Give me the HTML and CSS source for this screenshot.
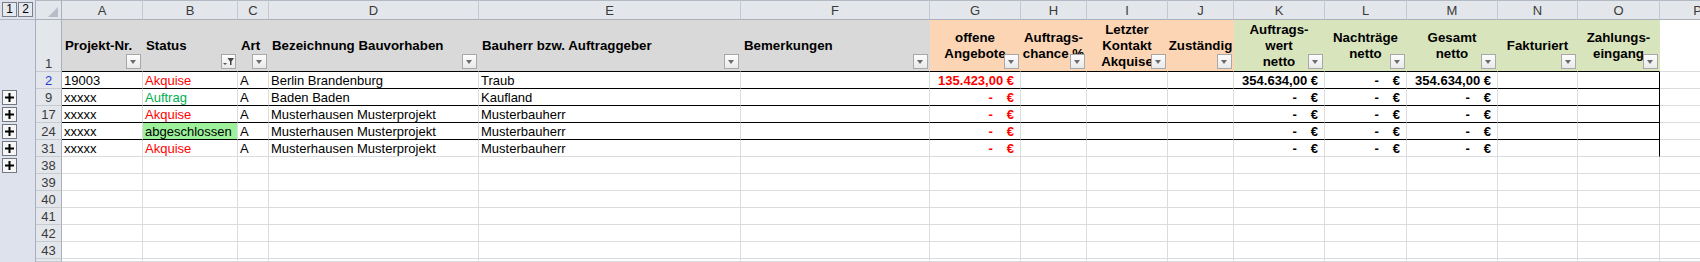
FILE: index.html
```html
<!DOCTYPE html>
<html lang="de">
<head>
<meta charset="UTF-8">
<title>Projektliste</title>
<link rel="stylesheet" href="styles.css">
</head>
<body>
<div class="sheet">
  <!-- column letters -->
  <div class="ol top"><span class="lvl">1</span><span class="lvl">2</span></div>
  <div class="corner"><svg width="10" height="10" viewBox="0 0 10 10"><polygon points="10,0 10,10 0,10" fill="#b7bcc6"/></svg></div>
  <div class="ch">A</div><div class="ch">B</div><div class="ch">C</div><div class="ch">D</div><div class="ch">E</div><div class="ch">F</div><div class="ch">G</div><div class="ch">H</div><div class="ch">I</div><div class="ch">J</div><div class="ch">K</div><div class="ch">L</div><div class="ch">M</div><div class="ch">N</div><div class="ch">O</div><div class="ch">P</div>

  <!-- row 1: headers -->
  <div class="ol"></div><div class="rh">1</div>
  <div class="c h b"><span>Projekt-Nr.</span><span class="fb"></span></div>
  <div class="c h b"><span>Status</span><span class="fb on"><svg width="13" height="13" viewBox="0 0 13 13"><polygon points="1,8 5,8 3,10" fill="#555"/><polygon points="5.5,3 12,3 9.5,6.5 9.5,10 8,10 8,6.5" fill="#444"/></svg></span></div>
  <div class="c h b"><span>Art</span><span class="fb"></span></div>
  <div class="c h b"><span>Bezeichnung Bauvorhaben</span><span class="fb"></span></div>
  <div class="c h b"><span>Bauherr bzw. Auftraggeber</span><span class="fb"></span></div>
  <div class="c h b"><span>Bemerkungen</span><span class="fb"></span></div>
  <div class="c h hc o b"><span>offene<br>Angebote</span><span class="fb"></span></div>
  <div class="c h hc o b"><span>Auftrags-<br>chance %</span><span class="fb"></span></div>
  <div class="c h hc o b"><span>Letzter<br>Kontakt<br>Akquise</span><span class="fb"></span></div>
  <div class="c h hc o b"><span>Zuständig</span><span class="fb"></span></div>
  <div class="c h hc g b"><span>Auftrags-<br>wert<br>netto</span><span class="fb"></span></div>
  <div class="c h hc g b"><span>Nachträge<br>netto</span><span class="fb"></span></div>
  <div class="c h hc g b"><span>Gesamt<br>netto</span><span class="fb"></span></div>
  <div class="c h hc g b"><span>Fakturiert</span><span class="fb"></span></div>
  <div class="c h hc g b"><span>Zahlungs-<br>eingang</span><span class="fb"></span></div>
  <div class="c"></div>

  <!-- row 2 -->
  <div class="ol"></div><div class="rh blue">2</div>
  <div class="c b">19003</div><div class="c b red">Akquise</div><div class="c b">A</div><div class="c b">Berlin Brandenburg</div><div class="c b">Traub</div><div class="c b"></div>
  <div class="c b m red">135.423,00 €</div><div class="c b"></div><div class="c b"></div><div class="c b"></div>
  <div class="c b m">354.634,00 €</div><div class="c b m"><span class="d">-</span>€</div><div class="c b m">354.634,00 €</div><div class="c b"></div><div class="c b r"></div><div class="c"></div>

  <!-- row 9 -->
  <div class="ol"><span class="plus"><svg width="13" height="13" viewBox="0 0 13 13"><rect x="2" y="5.5" width="9" height="2" fill="#000"/><rect x="5.5" y="2" width="2" height="9" fill="#000"/></svg></span></div><div class="rh">9</div>
  <div class="c b">xxxxx</div><div class="c b grn">Auftrag</div><div class="c b">A</div><div class="c b">Baden Baden</div><div class="c b">Kaufland</div><div class="c b"></div>
  <div class="c b m red"><span class="d">-</span>€</div><div class="c b"></div><div class="c b"></div><div class="c b"></div>
  <div class="c b m"><span class="d">-</span>€</div><div class="c b m"><span class="d">-</span>€</div><div class="c b m"><span class="d">-</span>€</div><div class="c b"></div><div class="c b r"></div><div class="c"></div>

  <!-- row 17 -->
  <div class="ol"><span class="plus"><svg width="13" height="13" viewBox="0 0 13 13"><rect x="2" y="5.5" width="9" height="2" fill="#000"/><rect x="5.5" y="2" width="2" height="9" fill="#000"/></svg></span></div><div class="rh">17</div>
  <div class="c b">xxxxx</div><div class="c b red">Akquise</div><div class="c b">A</div><div class="c b">Musterhausen Musterprojekt</div><div class="c b">Musterbauherr</div><div class="c b"></div>
  <div class="c b m red"><span class="d">-</span>€</div><div class="c b"></div><div class="c b"></div><div class="c b"></div>
  <div class="c b m"><span class="d">-</span>€</div><div class="c b m"><span class="d">-</span>€</div><div class="c b m"><span class="d">-</span>€</div><div class="c b"></div><div class="c b r"></div><div class="c"></div>

  <!-- row 24 -->
  <div class="ol"><span class="plus"><svg width="13" height="13" viewBox="0 0 13 13"><rect x="2" y="5.5" width="9" height="2" fill="#000"/><rect x="5.5" y="2" width="2" height="9" fill="#000"/></svg></span></div><div class="rh">24</div>
  <div class="c b">xxxxx</div><div class="c b done">abgeschlossen</div><div class="c b">A</div><div class="c b">Musterhausen Musterprojekt</div><div class="c b">Musterbauherr</div><div class="c b"></div>
  <div class="c b m red"><span class="d">-</span>€</div><div class="c b"></div><div class="c b"></div><div class="c b"></div>
  <div class="c b m"><span class="d">-</span>€</div><div class="c b m"><span class="d">-</span>€</div><div class="c b m"><span class="d">-</span>€</div><div class="c b"></div><div class="c b r"></div><div class="c"></div>

  <!-- row 31 -->
  <div class="ol"><span class="plus"><svg width="13" height="13" viewBox="0 0 13 13"><rect x="2" y="5.5" width="9" height="2" fill="#000"/><rect x="5.5" y="2" width="2" height="9" fill="#000"/></svg></span></div><div class="rh">31</div>
  <div class="c">xxxxx</div><div class="c red">Akquise</div><div class="c">A</div><div class="c">Musterhausen Musterprojekt</div><div class="c">Musterbauherr</div><div class="c"></div>
  <div class="c m red"><span class="d">-</span>€</div><div class="c"></div><div class="c"></div><div class="c"></div>
  <div class="c m"><span class="d">-</span>€</div><div class="c m"><span class="d">-</span>€</div><div class="c m"><span class="d">-</span>€</div><div class="c"></div><div class="c r"></div><div class="c"></div>

  <!-- empty rows -->
  <div class="ol"><span class="plus"><svg width="13" height="13" viewBox="0 0 13 13"><rect x="2" y="5.5" width="9" height="2" fill="#000"/><rect x="5.5" y="2" width="2" height="9" fill="#000"/></svg></span></div><div class="rh">38</div>
  <div class="c"></div><div class="c"></div><div class="c"></div><div class="c"></div><div class="c"></div><div class="c"></div><div class="c"></div><div class="c"></div><div class="c"></div><div class="c"></div><div class="c"></div><div class="c"></div><div class="c"></div><div class="c"></div><div class="c"></div><div class="c"></div>
  <div class="ol"></div><div class="rh">39</div>
  <div class="c"></div><div class="c"></div><div class="c"></div><div class="c"></div><div class="c"></div><div class="c"></div><div class="c"></div><div class="c"></div><div class="c"></div><div class="c"></div><div class="c"></div><div class="c"></div><div class="c"></div><div class="c"></div><div class="c"></div><div class="c"></div>
  <div class="ol"></div><div class="rh">40</div>
  <div class="c"></div><div class="c"></div><div class="c"></div><div class="c"></div><div class="c"></div><div class="c"></div><div class="c"></div><div class="c"></div><div class="c"></div><div class="c"></div><div class="c"></div><div class="c"></div><div class="c"></div><div class="c"></div><div class="c"></div><div class="c"></div>
  <div class="ol"></div><div class="rh">41</div>
  <div class="c"></div><div class="c"></div><div class="c"></div><div class="c"></div><div class="c"></div><div class="c"></div><div class="c"></div><div class="c"></div><div class="c"></div><div class="c"></div><div class="c"></div><div class="c"></div><div class="c"></div><div class="c"></div><div class="c"></div><div class="c"></div>
  <div class="ol"></div><div class="rh">42</div>
  <div class="c"></div><div class="c"></div><div class="c"></div><div class="c"></div><div class="c"></div><div class="c"></div><div class="c"></div><div class="c"></div><div class="c"></div><div class="c"></div><div class="c"></div><div class="c"></div><div class="c"></div><div class="c"></div><div class="c"></div><div class="c"></div>
  <div class="ol"></div><div class="rh">43</div>
  <div class="c"></div><div class="c"></div><div class="c"></div><div class="c"></div><div class="c"></div><div class="c"></div><div class="c"></div><div class="c"></div><div class="c"></div><div class="c"></div><div class="c"></div><div class="c"></div><div class="c"></div><div class="c"></div><div class="c"></div><div class="c"></div>
  <div class="ol"></div><div class="rh"></div>
  <div class="c"></div><div class="c"></div><div class="c"></div><div class="c"></div><div class="c"></div><div class="c"></div><div class="c"></div><div class="c"></div><div class="c"></div><div class="c"></div><div class="c"></div><div class="c"></div><div class="c"></div><div class="c"></div><div class="c"></div><div class="c"></div>
</div>
</body>
</html>
```

FILE: styles.css
```css
body {
  margin: 0;
  font-family: "Liberation Sans", Arial, sans-serif;
  font-size: 13px;
  background: #fff;
  color: #000;
  overflow: hidden;
  height: 262px;
}
.sheet {
  display: grid;
  grid-template-columns: 36px 26px 81px 95px 31px 210px 262px 189px 91px 66px 81px 66px 91px 82px 91px 80px 82px 76px;
  grid-template-rows: 20px 52px repeat(11, 17px) 3px;
  width: 1736px;
}
.sheet > div {
  box-sizing: border-box;
  white-space: nowrap;
  overflow: hidden;
}

/* outline panel */
.ol {
  background: #dde2ec;
  border-right: 1px solid #a9b0bd;
  padding: 1px 0 0 2px;
}
.ol.top {
  display: flex;
  gap: 1px;
  padding: 2px 0 0 2px;
  border-bottom: 1px solid #b2b8c4;
}
.lvl {
  width: 15px;
  height: 15px;
  box-sizing: border-box;
  border: 1px solid #7c7f86;
  background: #e6e9f0;
  font-size: 12px;
  line-height: 13px;
  text-align: center;
}
.plus {
  display: block;
  width: 15px;
  height: 15px;
  box-sizing: border-box;
  border: 1px solid #74777d;
  background: #f6f6f6;
}
.plus svg { display: block; }

/* headers */
.corner {
  background: #e3e6eb;
  border-right: 1px solid #a9b0bc;
  border-bottom: 1px solid #a9b0bc;
  display: flex;
  justify-content: flex-end;
  align-items: flex-end;
  padding: 0 3px 2px 0;
  box-shadow: inset 0 1px 0 #b4bac4;
}
.ch {
  background: #e3e6eb;
  border-right: 1px solid #c3c8d0;
  border-bottom: 1px solid #a9b0bc;
  color: #3a3a3a;
  text-align: center;
  line-height: 17px;
  padding-top: 2px;
  box-shadow: inset 0 1px 0 #b4bac4;
}
.rh {
  background: #e3e6eb;
  border-right: 1px solid #a9b0bc;
  border-bottom: 1px solid #c6cbd3;
  color: #3a3a3a;
  display: flex;
  justify-content: center;
  align-items: flex-end;
  line-height: 15px;
}
.rh.blue { color: #1f3bd8; }

/* cells */
.c {
  border-right: 1px solid #dadcdd;
  border-bottom: 1px solid #dadcdd;
  padding: 0 2px;
  display: flex;
  align-items: flex-end;
  line-height: 15px;
}
.c.b { border-bottom-color: #000; }
.c.r { border-right-color: #000; }

.h {
  position: relative;
  background: #d9d9d9;
  border-right-color: transparent;
  align-items: center;
  font-weight: bold;
  font-size: 13.3px;
  line-height: 16px;
  padding: 0 3px;
}
.h.hc {
  justify-content: center;
  text-align: center;
}
.h.o { background: #fcd5b4; }
.h.g { background: #d8e4bc; }

.fb {
  position: absolute;
  right: 1px;
  bottom: 2px;
  width: 15px;
  height: 15px;
  box-sizing: border-box;
  border: 1px solid #a8a8a8;
  background: linear-gradient(#fdfdfd, #e9e9e9);
}
.fb::after {
  content: "";
  position: absolute;
  left: 3px;
  top: 5px;
  border-left: 3.5px solid transparent;
  border-right: 3.5px solid transparent;
  border-top: 4px solid #6b6b6b;
}
.fb.on::after { display: none; }
.fb svg { display: block; }

.red { color: #ff0000; }
.grn { color: #00b050; }
.done { background: #9cf19a; }

.m {
  justify-content: flex-end;
  font-weight: bold;
  padding-right: 6px;
}
.d { margin-right: 14px; }
```
